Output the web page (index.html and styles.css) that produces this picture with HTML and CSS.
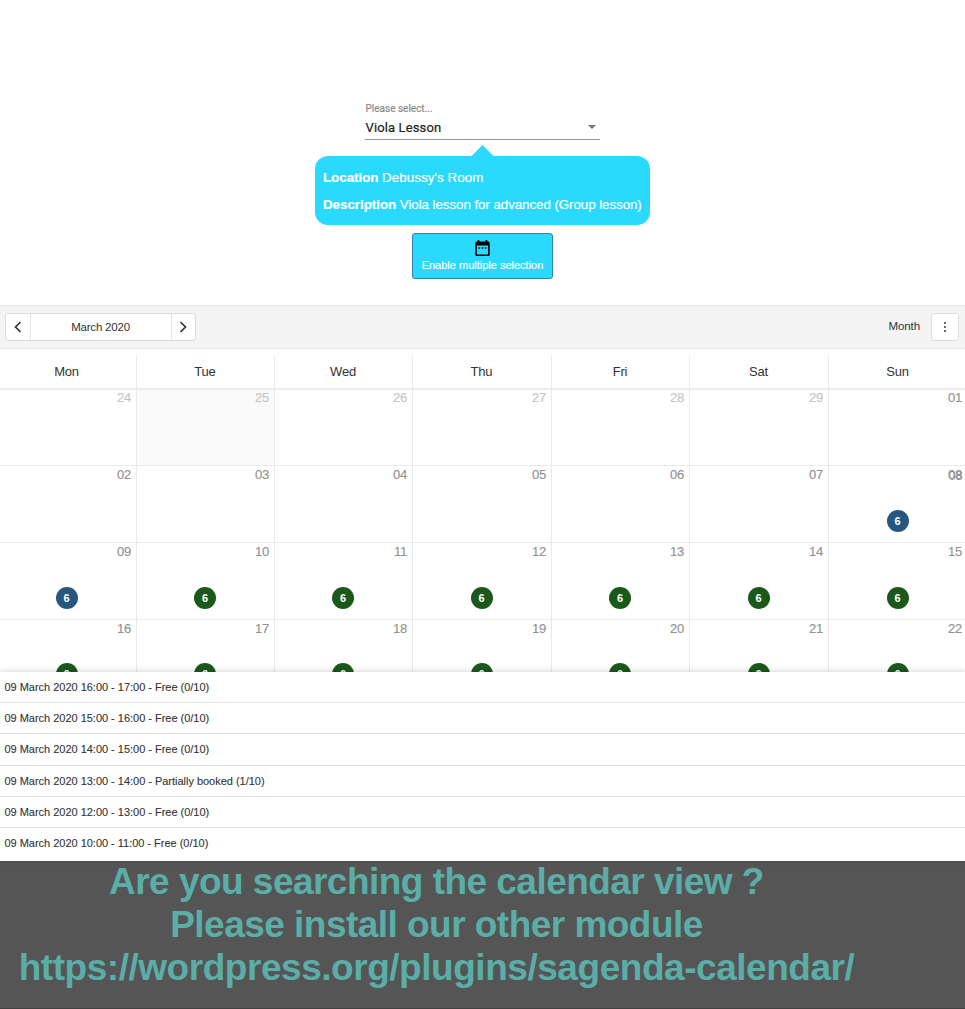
FILE: index.html
```html
<!DOCTYPE html>
<html lang="en">
<head>
<meta charset="utf-8">
<title>Sagenda</title>
<link rel="stylesheet" href="styles.css">
</head>
<body>
<main class="page">
  <section class="booking">
    <div class="select">
      <div class="select-label">Please select...</div>
      <div class="select-row"><span class="select-value">Viola Lesson</span><svg class="caret" viewBox="0 0 8 4"><path d="M0 0h8L4 4z"/></svg></div>
    </div>
    <div class="tip-arrow"></div>
    <div class="tip">
      <p><b class="loc">Location</b> <span class="room">Debussy's Room</span></p>
      <p><b class="desc">Description</b> <span class="about">Viola lesson for advanced (Group lesson)</span></p>
    </div>
    <button class="multi">
      <svg viewBox="0 0 18 20" class="cal-icon"><path d="M3 0h2v2h8V0h2v2h1a2 2 0 0 1 2 2v14a2 2 0 0 1-2 2H2a2 2 0 0 1-2-2V4a2 2 0 0 1 2-2h1zM2 7v11h14V7zM4 9h2v2H4zm4 0h2v2H8zm4 0h2v2h-2z" fill-rule="evenodd"/></svg>
      <span>Enable multiple selection</span>
    </button>
  </section>
  <nav class="toolbar">
    <div class="pager">
      <span class="step"><svg viewBox="0 0 8 12"><path d="M6.5 1L1.5 6l5 5"/></svg></span>
      <span class="period"><span>March 2020</span></span>
      <span class="step"><svg viewBox="0 0 8 12"><path d="M1.5 1l5 5-5 5"/></svg></span>
    </div>
    <div class="view"><span class="mode">Month</span><span class="more"><svg viewBox="0 0 4 12"><circle cx="2" cy="2" r=".9"/><circle cx="2" cy="6" r=".9"/><circle cx="2" cy="10" r=".9"/></svg></span></div>
  </nav>
  <section class="calendar">
    <div class="week days"><span>Mon</span><span>Tue</span><span>Wed</span><span>Thu</span><span>Fri</span><span>Sat</span><span>Sun</span></div>
    <div class="week r1 past"><div>24</div><div class="today">25</div><div>26</div><div>27</div><div>28</div><div>29</div><div class="current">01</div></div>
    <div class="week r2"><div>02</div><div>03</div><div>04</div><div>05</div><div>06</div><div>07</div><div><span class="strong">08</span><i class="blue">6</i></div></div>
    <div class="week r3"><div>09<i class="blue">6</i></div><div>10<i>6</i></div><div>11<i>6</i></div><div>12<i>6</i></div><div>13<i>6</i></div><div>14<i>6</i></div><div>15<i>6</i></div></div>
    <div class="week r4"><div>16<i>6</i></div><div>17<i>6</i></div><div>18<i>6</i></div><div>19<i>6</i></div><div>20<i>6</i></div><div>21<i>6</i></div><div>22<i>6</i></div></div>
  </section>
  <section class="events">
    <div><span>09 March 2020 16:00 - 17:00 - Free (0/10)</span></div>
    <div><span>09 March 2020 15:00 - 16:00 - Free (0/10)</span></div>
    <div><span>09 March 2020 14:00 - 15:00 - Free (0/10)</span></div>
    <div><span>09 March 2020 13:00 - 14:00 - Partially booked (1/10)</span></div>
    <div><span>09 March 2020 12:00 - 13:00 - Free (0/10)</span></div>
    <div><span>09 March 2020 10:00 - 11:00 - Free (0/10)</span></div>
  </section>
  <footer class="notice">
    <div class="n1">Are you searching the calendar view ?</div>
    <div class="n2">Please install our other module</div>
    <div class="n3">https://wordpress.org/plugins/sagenda-calendar/</div>
  </footer>
</main>
</body>
</html>
```
FILE: styles.css
```css
* { box-sizing: border-box; }
body { margin: 0; background: #fff; color: #333; font-family: "Liberation Sans", Arial, sans-serif; }
.page { width: 965px; height: 1009px; overflow: hidden; display: flex; flex-direction: column; }
.booking { height: 305px; padding-top: 102px; display: flex; flex-direction: column; align-items: center; flex: none; }
.select { width: 235px; height: 38px; border-bottom: 1px solid #949494; font-family: Roboto, sans-serif; }
.select-label { padding-left: .5px; font-size: 10px; line-height: 13px; color: #8a8a8a; -webkit-text-stroke: .2px #8a8a8a; }
.select-row { display: flex; align-items: center; justify-content: space-between; height: 25px; padding: 0 4px 1px .5px; color: #212121; font-size: 13px; letter-spacing: .13px; -webkit-text-stroke: .2px #212121; }
.caret { width: 8px; height: 4px; fill: #757575; }
.tip-arrow { width: 24px; height: 12px; margin-top: 5px; background: #29d9fe; clip-path: polygon(50% 0, 100% 100%, 0 100%); flex: none; }
.tip { width: 335px; height: 69px; margin-top: -1px; padding: 8px 8px 0; border-radius: 13px; background: #29d9fe; color: #fff; font-size: 13.3px; flex: none; }
.tip p { margin: 0; height: 27px; line-height: 27px; white-space: nowrap; -webkit-text-stroke: .2px #fff; }
.room { letter-spacing: .08px; }
.about { letter-spacing: -.045px; }
.multi { width: 141px; height: 46px; margin-top: 8px; padding: 6px 0 0; border: 1px solid #3781aa; border-radius: 3px; background: #29d9fe; color: #fff; font: 11px/16px "Liberation Sans", Arial, sans-serif; -webkit-text-stroke: .2px #fff; display: flex; flex-direction: column; align-items: center; gap: 1px; flex: none; }
.cal-icon { width: 15px; height: 16px; fill: #000; flex: none; -webkit-text-stroke: 0; }
.toolbar { height: 44px; flex: none; background: #f4f4f4; border: solid #e5e5e5; border-width: 1px 0; padding: 0 5px; display: flex; align-items: center; justify-content: space-between; }
.pager { display: flex; width: 191px; height: 28px; background: #fff; border: 1px solid #ddd; border-radius: 3px; }
.step { flex: 1; display: flex; align-items: center; justify-content: center; }
.step svg { width: 8px; height: 12px; fill: none; stroke: #333; stroke-width: 1.7; }
.period { width: 142px; border: solid #e5e5e5; border-width: 0 1px; font-size: 11.5px; line-height: 26px; text-align: center; }
.period span { letter-spacing: -.2px; }
.view { display: flex; align-items: center; gap: 11px; font-size: 11.5px; }
.mode { padding-bottom: 3px; letter-spacing: -.1px; }
.more { width: 28px; height: 28px; margin-right: 1px; background: #fff; border: 1px solid #ddd; border-radius: 3px; display: flex; align-items: center; justify-content: center; }
.more svg { width: 4px; height: 12px; fill: #222; }
.calendar { height: 323px; flex: none; overflow: hidden; padding-top: 7px; }
.week { width: 969px; margin: 0 -2px; display: grid; grid-template-columns: 139px 138px 138px 139px 138px 139px 138px; }
.week > * { border-right: 1px solid #eaeaea; }
.week > :last-child { border-right: 0; }
.days { height: 34px; border-bottom: 2px solid #ececec; font-size: 13px; line-height: 32px; text-align: center; letter-spacing: -.2px; }
.days > span { padding-right: 1px; }
.week > div { border-bottom: 1px solid #eaeaea; padding: 0 5px 0 0; font-size: 13px; line-height: 16px; color: #929292; text-align: right; letter-spacing: -.2px; -webkit-text-stroke: .15px currentColor; }
.past > div { color: #c5c5c5; }
.past > .current { color: #929292; }
.past > .today { background: #fafafa; }
.r1 { height: 76px; }
.r2, .r3 { height: 77px; }
.r4 { height: 79px; }
.r2 > div, .r3 > div, .r4 > div { padding-top: 1px; }
.strong { text-shadow: .5px .5px 0 #929292; }
.week i { display: block; width: 22px; height: 22px; margin: 27px auto 0; position: relative; left: 2px; border-radius: 50%; background: #1b591b; color: #fff; font: bold 11px/22px "Liberation Sans", Arial, sans-serif; text-align: center; letter-spacing: 0; -webkit-text-stroke: 0; }
.week i.blue { background: #27567f; }
.r4 i { margin-top: 26px; }
.events { height: 189px; flex: none; background: #fff; font-size: 11px; box-shadow: 0 -1px 6px rgba(0,0,0,.16); z-index: 1; }
.events div { height: 31.2px; padding-left: 4.5px; line-height: 30px; border-bottom: 1px solid #e2e2e2; letter-spacing: -.02px; -webkit-text-stroke: .1px #333; }
.events div:last-child { border: 0; }
.notice { height: 148px; flex: none; background: #555; border-bottom: 1px solid #404040; color: #5aaea7; font-size: 37px; font-weight: bold; line-height: 43px; text-align: center; padding-right: 92px; white-space: nowrap; }
.notice div { margin-top: -1px; margin-bottom: 1px; letter-spacing: -.53px; }
.notice .n3 { letter-spacing: -.46px; }
.notice { display: flow-root; }
```
